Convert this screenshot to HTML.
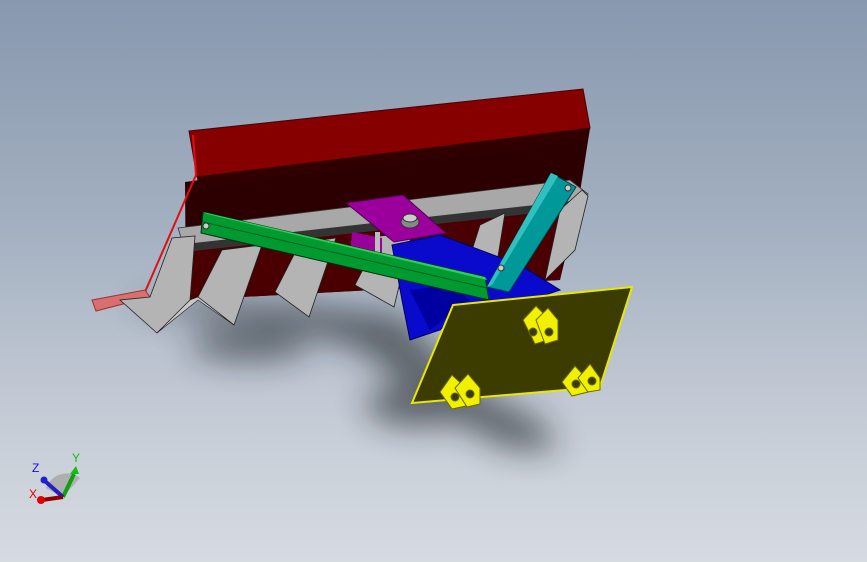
<!DOCTYPE html>
<html><head><style>
html,body{margin:0;padding:0}
body{width:867px;height:562px;overflow:hidden;background:linear-gradient(180deg,#8898ae 0%,#a3b0c1 40%,#c6ccd6 75%,#d6dbe2 100%);font-family:"Liberation Sans",sans-serif}
svg{position:absolute;left:0;top:0}
</style></head><body>
<svg width="867" height="562" viewBox="0 0 867 562">
<defs>
<filter id="bl" x="-50%" y="-50%" width="200%" height="200%"><feGaussianBlur stdDeviation="16"/></filter>
</defs>
<g filter="url(#bl)" fill="#1e2128" opacity="0.6">
<path d="M125 305 L220 320 L300 330 L360 350 L400 380 L450 420 L510 450 L560 450 L540 420 L480 390 L430 345 L400 315 L300 305 L200 300 Z"/>
<ellipse cx="250" cy="345" rx="60" ry="15"/>
<ellipse cx="420" cy="405" rx="55" ry="22"/>
</g>
<polygon points="185,182 590,128 578,205 560,280 186,300" fill="#2c0000"/>
<polygon points="186,250 570,200 560,280 186,300" fill="#4a0000"/>
<polygon points="189,131 583,89 590,128 197,177" fill="#860000" stroke="#4a0000" stroke-width="1"/>
<polygon points="197,177 590,128 588,140 198,186" fill="#300000"/>
<polygon points="178,228 570,180 588,194 580,208 185,250" fill="#a8a8a8" stroke="#333" stroke-width="0.8"/>
<polygon points="185,244 580,200 580,208 185,252" fill="#333"/>
<polyline points="193,135 196,175 145,292" fill="none" stroke="#e01010" stroke-width="2"/>
<polygon points="92,300 145,290 150,297 96,311" fill="#d87070" stroke="#a03030" stroke-width="1"/>
<g fill="#b4b4b4" stroke="#222" stroke-width="0.8">
<polygon points="120,300 150,297 172,238 195,236 190,300 157,333"/>
<polygon points="198,297 222,250 262,245 234,325"/>
<polygon points="275,292 300,243 336,238 309,317"/>
<polygon points="355,285 380,236 412,233 394,307"/>
<polygon points="462,282 480,225 505,213 495,275"/>
<polygon points="545,280 560,210 582,190 588,196 575,250"/>
</g>
<g fill="#c8c8c8" stroke="#222" stroke-width="0.6">
<polygon points="157,333 190,300 198,297 234,325 198,300"/>
</g>
<polygon points="352,232 382,238 382,258 350,254" fill="#9a009a"/>
<rect x="375" y="232" width="5" height="28" fill="#bbb"/>
<polygon points="392,245 440,235 520,265 560,290 530,300 460,310 440,330 410,340 402,300" fill="#0a0acc" stroke="#000060" stroke-width="1"/>
<polygon points="410,290 450,285 470,300 430,330" fill="#0000a0"/>
<polygon points="346,203 403,195 446,233 394,242" fill="#9c009c" stroke="#500050" stroke-width="1"/>
<ellipse cx="410" cy="222" rx="9" ry="6" fill="#888" stroke="#333"/>
<ellipse cx="410" cy="218" rx="7" ry="4" fill="#ccc" stroke="#333"/>
<polygon points="201,233 203,212 485,277 489,300" fill="#009a30" stroke="#003010" stroke-width="1"/>
<polygon points="203,212 207,214 487,280 485,277" fill="#30d050"/>
<line x1="203" y1="222" x2="487" y2="288" stroke="#006020" stroke-width="1"/>
<circle cx="206" cy="226" r="3" fill="#ccc" stroke="#333"/>
<polygon points="551,173 576,187 509,292 487,287" fill="#009898" stroke="#004040" stroke-width="1"/>
<polygon points="551,173 558,176 492,285 487,287" fill="#30c0c0"/>
<circle cx="568" cy="188" r="3" fill="#ccc" stroke="#333"/>
<circle cx="501" cy="268" r="3" fill="#ccc" stroke="#333"/>
<polygon points="453,305 632,287 600,387 412,403" fill="#3c3c00" stroke="#e8e800" stroke-width="2"/>
<g fill="#f0f000" stroke="#6a6a00" stroke-width="1">
<path d="M523 320 L536 306 L548 318 L548 340 L535 344 Z"/><circle cx="533" cy="332" r="4" fill="#3c3c00"/>
<path d="M536 320 L548 308 L558 320 L558 340 L545 344 Z"/><circle cx="549" cy="332" r="4" fill="#3c3c00"/>
<path d="M562 382 L575 366 L588 380 L588 392 L572 396 Z"/><circle cx="576" cy="384" r="4" fill="#3c3c00"/>
<path d="M578 378 L590 364 L600 378 L600 390 L588 392 Z"/><circle cx="592" cy="381" r="4" fill="#3c3c00"/>
<path d="M440 392 L452 375 L466 388 L466 406 L452 409 Z"/><circle cx="455" cy="397" r="4" fill="#3c3c00"/>
<path d="M455 388 L468 374 L480 388 L480 404 L467 407 Z"/><circle cx="470" cy="394" r="4" fill="#3c3c00"/>
</g>
<path d="M46 488 A22 22 0 0 1 80 478 L63 497 Z" fill="#a0a0a0" opacity="0.7"/>
<line x1="63" y1="497" x2="74" y2="474" stroke="#10a010" stroke-width="4"/>
<polygon points="70,474 79,474 76,466" fill="#10c010"/>
<line x1="63" y1="497" x2="46" y2="482" stroke="#2020c0" stroke-width="4"/>
<circle cx="44" cy="480" r="3.5" fill="#2020d0"/>
<line x1="63" y1="497" x2="42" y2="500" stroke="#900000" stroke-width="4"/>
<circle cx="41" cy="500" r="4" fill="#e00000"/>
<text x="72" y="462" font-size="12" fill="#10c010">Y</text>
<text x="32" y="472" font-size="12" fill="#1010e0">Z</text>
<text x="29" y="498" font-size="12" fill="#e00000">X</text>
</svg>
</body></html>
